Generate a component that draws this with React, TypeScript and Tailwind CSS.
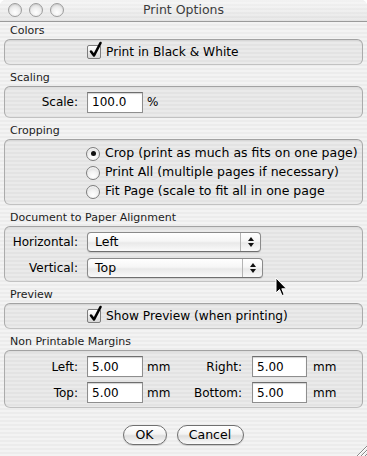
import React from "react";

function Checkbox() {
  return (
    <div className="relative w-[14px] h-[14px] shrink-0 rounded-[2px] border border-[#7d7d7d] bg-[linear-gradient(180deg,#ffffff,#e9e9e9_55%,#d6d6d6)] shadow-[inset_0_1px_0_#fff]">
      <svg className="absolute left-[1px] top-[-4px] overflow-visible" width="14" height="16" viewBox="0 0 14 16">
        <path d="M2 9.5 L5 13.5 L11.5 1" fill="none" stroke="#000" strokeWidth="2.6" strokeLinecap="round" strokeLinejoin="round" />
      </svg>
    </div>
  );
}

function Radio({ on }: { on?: boolean }) {
  return (
    <div className="w-[14px] h-[14px] shrink-0 rounded-full border border-[#7d7d7d] bg-[radial-gradient(circle_at_50%_75%,#ffffff,#f2f2f2_45%,#cfcfcf)] flex items-center justify-center shadow-[inset_0_1px_1px_rgba(255,255,255,0.9)]">
      {on ? <div className="w-[5px] h-[5px] rounded-full bg-[#111]" /> : null}
    </div>
  );
}

function Field({ value, w }: { value: string; w: string }) {
  return (
    <div className={`${w} h-[21px] shrink-0 bg-white border border-[#8e8e8e] border-t-[#6e6e6e] shadow-[inset_0_1px_1px_rgba(0,0,0,0.18)] flex items-center pl-[4px] text-[12px] leading-none`}>
      {value}
    </div>
  );
}

function Popup({ value, w }: { value: string; w: string }) {
  return (
    <div className={`${w} h-[20px] shrink-0 rounded-[4px] border border-[#8a8a8a] border-b-[#6f6f6f] bg-[linear-gradient(180deg,#ffffff,#f6f6f6_45%,#e9e9e9_55%,#fafafa)] shadow-[0_1px_1px_rgba(0,0,0,0.12)] flex items-stretch`}>
      <div className="flex-1 flex items-center pl-[7px] text-[12.5px] leading-none">{value}</div>
      <div className="w-[20px] border-l border-[#b4b4b4] flex flex-col items-center justify-center gap-[2px]">
        <svg width="6" height="4" viewBox="0 0 6 4"><path d="M0 4 L3 0 L6 4 Z" fill="#111" /></svg>
        <svg width="6" height="4" viewBox="0 0 6 4"><path d="M0 0 L6 0 L3 4 Z" fill="#111" /></svg>
      </div>
    </div>
  );
}

function Label({ children }: { children: React.ReactNode }) {
  return <div className="h-[13px] mb-[2px] pl-[6px] text-[11px] leading-[13px] text-[#1c1c1c] whitespace-nowrap">{children}</div>;
}

function Box({ h, className, children }: { h: string; className?: string; children: React.ReactNode }) {
  return (
    <div className={`${h} rounded-[6px] border border-[#ababab] border-t-[#a2a2a2] border-b-[#c2c2c2] bg-black/[0.035] shadow-[inset_0_1px_1px_rgba(0,0,0,0.06)] ${className ?? ""}`}>
      {children}
    </div>
  );
}

function Light() {
  return <div className="w-[14px] h-[14px] rounded-full border border-[#9c9c9c] bg-[radial-gradient(circle_at_50%_70%,#ffffff,#ededed_50%,#d2d2d2)] shadow-[inset_0_1px_1px_rgba(0,0,0,0.08)]" />;
}

function Button({ label, w }: { label: string; w: string }) {
  return (
    <div className={`${w} h-[20px] rounded-full border border-[#6f6f6f] bg-[linear-gradient(180deg,#ffffff,#f3f3f3_45%,#dedede_55%,#fbfbfb)] shadow-[0_1px_1px_rgba(0,0,0,0.15)] flex items-center justify-center text-[12.5px] leading-none`}>
      {label}
    </div>
  );
}

export default function App() {
  return (
    <div className="relative w-[367px] h-[456px] overflow-hidden rounded-t-[6px] font-['DejaVu_Sans',sans-serif] text-black bg-[repeating-linear-gradient(180deg,#ececec_0px,#ececec_2px,#f3f3f3_2px,#f3f3f3_4px)] flex flex-col">
      <div className="h-[22px] shrink-0 border-b border-[#9a9a9a] bg-[linear-gradient(180deg,rgba(255,255,255,0.35),rgba(0,0,0,0.04)),repeating-linear-gradient(180deg,#ebebeb_0px,#ebebeb_2px,#f2f2f2_2px,#f2f2f2_4px)] grid grid-cols-[1fr_auto_1fr] items-center">
        <div className="flex items-center gap-[7px] pl-[8px] pb-[1px]">
          <Light />
          <Light />
          <Light />
        </div>
        <div className="text-[12.5px] leading-none text-[#3c3c3c] pb-[1px]">Print Options</div>
        <div />
      </div>

      <div className="px-[4px] pt-[2px] flex flex-col text-[12px]">
        <Label>Colors</Label>
        <Box h="h-[26px]" className="flex items-center pl-[82px]">
          <Checkbox />
          <span className="ml-[5px] leading-none text-[12.2px]">Print in Black &amp; White</span>
        </Box>

        <div className="mt-[6px]"><Label>Scaling</Label></div>
        <Box h="h-[32px]" className="flex items-center">
          <div className="w-[73px] text-right leading-none">Scale:</div>
          <div className="ml-[9px]"><Field value="100.0" w="w-[56px]" /></div>
          <span className="ml-[4px] leading-none">%</span>
        </Box>

        <div className="mt-[6px]"><Label>Cropping</Label></div>
        <Box h="h-[66px]" className="flex flex-col pl-[81px] pt-[4px] text-[12.5px]">
          <div className="h-[19px] flex items-center">
            <Radio on />
            <span className="ml-[5px] leading-none whitespace-nowrap">Crop (print as much as fits on one page)</span>
          </div>
          <div className="h-[19px] flex items-center">
            <Radio />
            <span className="ml-[5px] leading-none whitespace-nowrap">Print All (multiple pages if necessary)</span>
          </div>
          <div className="h-[19px] flex items-center">
            <Radio />
            <span className="ml-[5px] leading-none whitespace-nowrap">Fit Page (scale to fit all in one page</span>
          </div>
        </Box>

        <div className="mt-[6px]"><Label>Document to Paper Alignment</Label></div>
        <Box h="h-[56px]" className="flex flex-col pt-[5px] gap-[6px]">
          <div className="flex items-center">
            <div className="w-[73px] text-right leading-none">Horizontal:</div>
            <div className="ml-[9px]"><Popup value="Left" w="w-[174px]" /></div>
          </div>
          <div className="flex items-center">
            <div className="w-[73px] text-right leading-none">Vertical:</div>
            <div className="ml-[9px]"><Popup value="Top" w="w-[176px]" /></div>
          </div>
        </Box>

        <div className="mt-[6px]"><Label>Preview</Label></div>
        <Box h="h-[26px]" className="flex items-center pl-[82px]">
          <Checkbox />
          <span className="ml-[5px] leading-none text-[12.2px]">Show Preview (when printing)</span>
        </Box>

        <div className="mt-[6px]"><Label>Non Printable Margins</Label></div>
        <Box h="h-[58px]" className="flex flex-col pt-[5px] gap-[5px]">
          <div className="flex items-center">
            <div className="w-[73px] text-right leading-none">Left:</div>
            <div className="ml-[9px]"><Field value="5.00" w="w-[56px]" /></div>
            <span className="ml-[4px] w-[25px] leading-none">mm</span>
            <div className="w-[70px] text-right leading-none">Right:</div>
            <div className="ml-[10px]"><Field value="5.00" w="w-[55px]" /></div>
            <span className="ml-[6px] leading-none">mm</span>
          </div>
          <div className="flex items-center">
            <div className="w-[73px] text-right leading-none">Top:</div>
            <div className="ml-[9px]"><Field value="5.00" w="w-[56px]" /></div>
            <span className="ml-[4px] w-[25px] leading-none">mm</span>
            <div className="w-[70px] text-right leading-none">Bottom:</div>
            <div className="ml-[10px]"><Field value="5.00" w="w-[55px]" /></div>
            <span className="ml-[6px] leading-none">mm</span>
          </div>
        </Box>

        <div className="mt-[17px] flex justify-center gap-[10px] pr-[1px]">
          <Button label="OK" w="w-[44px]" />
          <Button label="Cancel" w="w-[67px]" />
        </div>
      </div>

      <svg className="absolute right-0 bottom-0" width="12" height="12" viewBox="0 0 12 12">
        <path d="M12 2 L2 12 M12 6 L6 12 M12 10 L10 12" stroke="#8a8a8a" strokeWidth="1" />
        <path d="M12 3 L3 12 M12 7 L7 12" stroke="#ffffff" strokeWidth="1" />
      </svg>

      <svg className="absolute left-[275px] top-[277px]" width="13" height="20" viewBox="0 0 13 20">
        <path d="M1 1 L1 16 L4.5 12.5 L7 18.5 L9.2 17.6 L6.8 11.8 L11.5 11.8 Z" fill="#000" stroke="#fff" strokeWidth="1" strokeLinejoin="round" />
      </svg>
    </div>
  );
}
